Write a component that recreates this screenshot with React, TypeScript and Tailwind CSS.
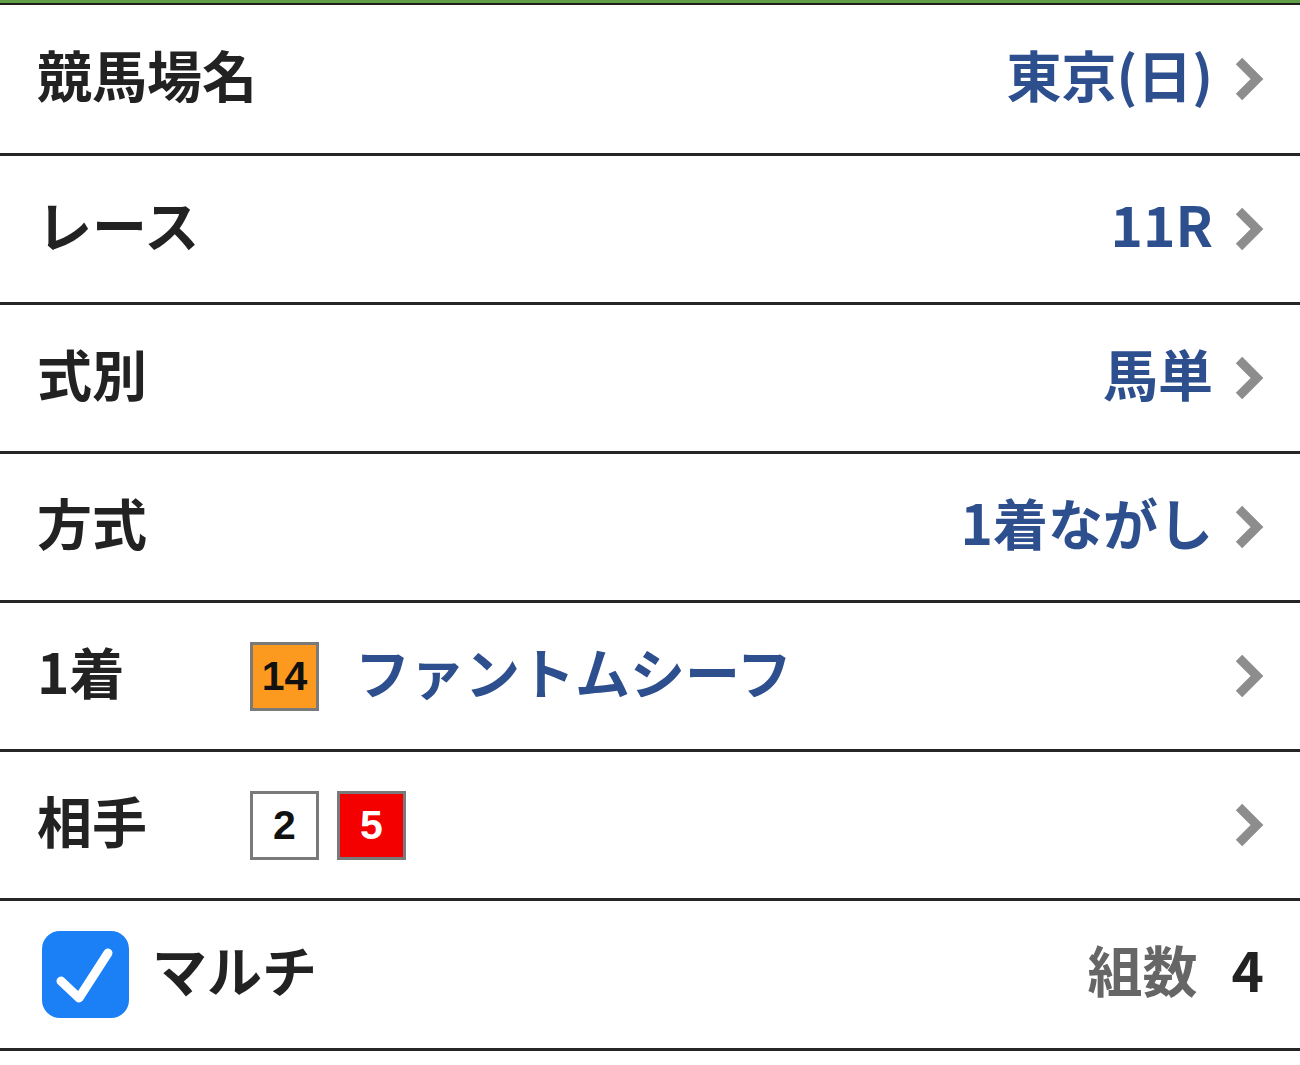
import React from "react";

const jp = { fontFamily: '"Noto Sans CJK JP", "Noto Sans", sans-serif' };

function Chevron() {
  return (
    <svg width="30" height="50" viewBox="0 0 30 50" className="shrink-0">
      <polyline
        points="5,7 23,25 5,43"
        fill="none"
        stroke="#8d8d8d"
        strokeWidth="9"
        strokeLinejoin="miter"
        strokeLinecap="butt"
      />
    </svg>
  );
}

function Row({
  label,
  children,
  right,
  first,
}: {
  label: React.ReactNode;
  children?: React.ReactNode;
  right?: React.ReactNode;
  first?: boolean;
}) {
  return (
    <div
      className={`flex items-center border-b-[3px] border-[#262626] pl-[37px] pr-[36px] ${
        first ? "h-[151px]" : "h-[149px]"
      }`}
    >
      <div className="mb-[12px] w-[213px] shrink-0 whitespace-nowrap text-[55px] font-bold leading-none text-[#222]">
        {label}
      </div>
      <div className="flex flex-1 items-center">{children}</div>
      {right}
    </div>
  );
}

function Value({ text }: { text: string }) {
  return (
    <div className="flex items-center gap-[21px]">
      <span className="mb-[12px] whitespace-nowrap text-[55px] font-bold leading-none text-[#2d4f8e]">
        {text}
      </span>
      <Chevron />
    </div>
  );
}

function Badge({ n, bg, fg }: { n: string; bg: string; fg: string }) {
  return (
    <div
      className={`flex h-[69px] w-[69px] items-center justify-center border-[3px] border-[#7a7a7a] text-[41px] font-bold leading-none ${bg} ${fg}`}
      style={{ fontFamily: '"Liberation Sans", Arial, sans-serif' }}
    >
      {n}
    </div>
  );
}

export default function App() {
  return (
    <div className="w-[1300px] h-[1065px] bg-white overflow-hidden" style={jp}>
      <div className="h-[3px] bg-[#5f9e45]" />
      <div className="h-[2px] bg-[#1e1e1e]" />
      <Row label="競馬場名" first right={<Value text="東京(日)" />} />
      <Row label="レース" right={<Value text="11R" />} />
      <Row label="式別" right={<Value text="馬単" />} />
      <Row label="方式" right={<Value text="1着ながし" />} />
      <Row label="1着" right={<Chevron />}>
        <Badge n="14" bg="bg-[#fb9a1e]" fg="text-[#111]" />
        <span className="mb-[12px] ml-[36px] whitespace-nowrap text-[55px] font-bold leading-none text-[#2d4f8e]">
          ファントムシーフ
        </span>
      </Row>
      <Row label="相手" right={<Chevron />}>
        <div className="flex items-center gap-[18px]">
          <Badge n="2" bg="bg-white" fg="text-[#111]" />
          <Badge n="5" bg="bg-[#f40000]" fg="text-white" />
        </div>
      </Row>
      <div className="flex h-[150px] items-center border-b-[3px] border-[#262626] pl-[42px] pr-[36px]">
        <div className="flex h-[87px] w-[87px] items-center justify-center rounded-[18px] bg-[#1b7ff6]">
          <svg width="87" height="87" viewBox="0 0 87 87">
            <polyline
              points="19,50 37,67 66,22"
              fill="none"
              stroke="white"
              strokeWidth="9"
              strokeLinecap="round"
              strokeLinejoin="round"
            />
          </svg>
        </div>
        <span className="mb-[12px] ml-[23px] text-[55px] font-bold leading-none text-[#222]">マルチ</span>
        <div className="flex-1" />
        <span className="mb-[12px] text-[55px] font-bold leading-none text-[#666]">組数</span>
        <span className="mb-[12px] ml-[34px] text-[55px] font-bold leading-none text-[#222]">4</span>
      </div>
    </div>
  );
}
